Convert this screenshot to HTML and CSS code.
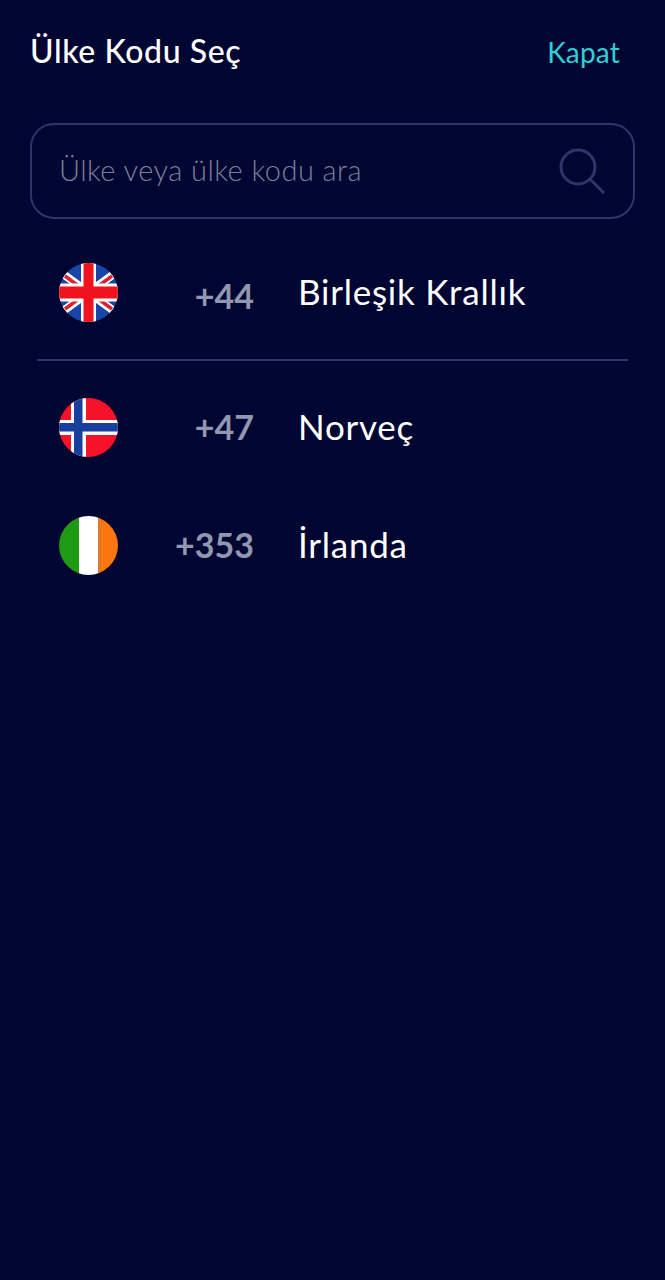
FILE: index.html
```html
<!DOCTYPE html>
<html lang="tr">
<head>
    <meta charset="UTF-8">
    <meta name="viewport" content="width=device-width, initial-scale=1.0">
    <title>Ülke Kodu Seç</title>
    <link rel="stylesheet" href="styles.css">
</head>
<body>
    <div class="page">

        <div class="header">
            <h1 class="title">Ülke Kodu Seç</h1>
            <a class="close" href="#">Kapat</a>
        </div>

        <div class="search">
            <span class="placeholder">Ülke veya ülke kodu ara</span>
            <svg class="search-icon" width="46" height="46" viewBox="0 0 46 46" fill="none">
                <circle cx="19" cy="19" r="17" stroke="#2f3569" stroke-width="3"/>
                <path d="M31 31 L45 45" stroke="#2f3569" stroke-width="3"/>
            </svg>
        </div>

        <div class="row row-first">
            <svg class="flag" width="59" height="59" viewBox="0 0 59 59">
                <defs><clipPath id="c1"><circle cx="29.5" cy="29.5" r="29.5"/></clipPath></defs>
                <g clip-path="url(#c1)">
                    <rect width="59" height="59" fill="#1746a8"/>
                    <path d="M0 8 L59 51 M59 8 L0 51" stroke="#fff" stroke-width="8"/>
                    <path d="M6 13 L25 27 M53 13 L34 27 M6 46 L25 32 M53 46 L34 32" stroke="#d9232e" stroke-width="3.5"/>
                    <rect x="22" width="15" height="59" fill="#fff"/>
                    <rect y="20.5" width="59" height="18" fill="#fff"/>
                    <rect x="24.5" width="10" height="59" fill="#f0131e"/>
                    <rect y="23.5" width="59" height="12" fill="#f0131e"/>
                </g>
            </svg>
            <span class="code">+44</span>
            <span class="name">Birleşik Krallık</span>
        </div>

        <div class="divider"></div>

        <div class="row row-second">
            <svg class="flag" width="59" height="59" viewBox="0 0 59 59">
                <defs><clipPath id="c2"><circle cx="29.5" cy="29.5" r="29.5"/></clipPath></defs>
                <g clip-path="url(#c2)">
                    <rect width="59" height="59" fill="#f5132a"/>
                    <rect x="12" width="15" height="59" fill="#fff"/>
                    <rect y="22" width="59" height="15" fill="#fff"/>
                    <rect x="15" width="8.5" height="59" fill="#173f9e"/>
                    <rect y="25" width="59" height="8.5" fill="#173f9e"/>
                </g>
            </svg>
            <span class="code">+47</span>
            <span class="name">Norveç</span>
        </div>

        <div class="row">
            <svg class="flag" width="59" height="59" viewBox="0 0 59 59">
                <defs><clipPath id="c3"><circle cx="29.5" cy="29.5" r="29.5"/></clipPath></defs>
                <g clip-path="url(#c3)">
                    <rect width="20" height="59" fill="#1f9a14"/>
                    <rect x="20" width="19.5" height="59" fill="#fff"/>
                    <rect x="39.5" width="19.5" height="59" fill="#fb760e"/>
                </g>
            </svg>
            <span class="code">+353</span>
            <span class="name">İrlanda</span>
        </div>

    </div>
</body>
</html>
```

FILE: styles.css
```css
html, body{
    margin: 0;
    padding: 0;
    height: 100%;
    background: #000532;
}
.page{
    height: 1280px;
    padding: 30px 30px 0 30px;
    box-sizing: border-box;
    font-family: "Lato", "Liberation Sans", sans-serif;
    color: #fff;
}
.header{
    display: flex;
    justify-content: space-between;
    align-items: center;
    height: 44px;
    padding-right: 15px;
}
.title{
    margin: 0;
    padding-bottom: 3px;
    font-size: 32px;
    font-weight: 500;
    letter-spacing: 0.6px;
}
.close{
    color: #2fd0d8;
    font-size: 28px;
    letter-spacing: 0.2px;
    text-decoration: none;
}
.search{
    display: flex;
    justify-content: space-between;
    align-items: center;
    box-sizing: border-box;
    height: 96px;
    margin-top: 49px;
    padding: 0 28px 0 27px;
    border: 2px solid #2f3569;
    border-radius: 24px;
}
.placeholder{
    padding-bottom: 4px;
    color: #7b8099;
    font-size: 29px;
    font-weight: 300;
    letter-spacing: 0.45px;
}
.row{
    display: flex;
    align-items: center;
    height: 59px;
    padding-left: 29px;
    margin-top: 59px;
}
.row-first{
    margin-top: 44px;
}
.row-second{
    margin-top: 37px;
}
.row-first .code{
    padding-top: 6px;
    padding-bottom: 0;
}
.flag{
    flex: none;
}
.code{
    width: 136px;
    padding-bottom: 2px;
    text-align: right;
    color: #9297b0;
    font-size: 34px;
    font-weight: 700;
}
.name{
    margin-left: 44px;
    padding-bottom: 4px;
    font-size: 35px;
    letter-spacing: 0.75px;
}
.divider{
    height: 2px;
    margin: 37px 7px 0 7px;
    background: #2f3569;
}
```
